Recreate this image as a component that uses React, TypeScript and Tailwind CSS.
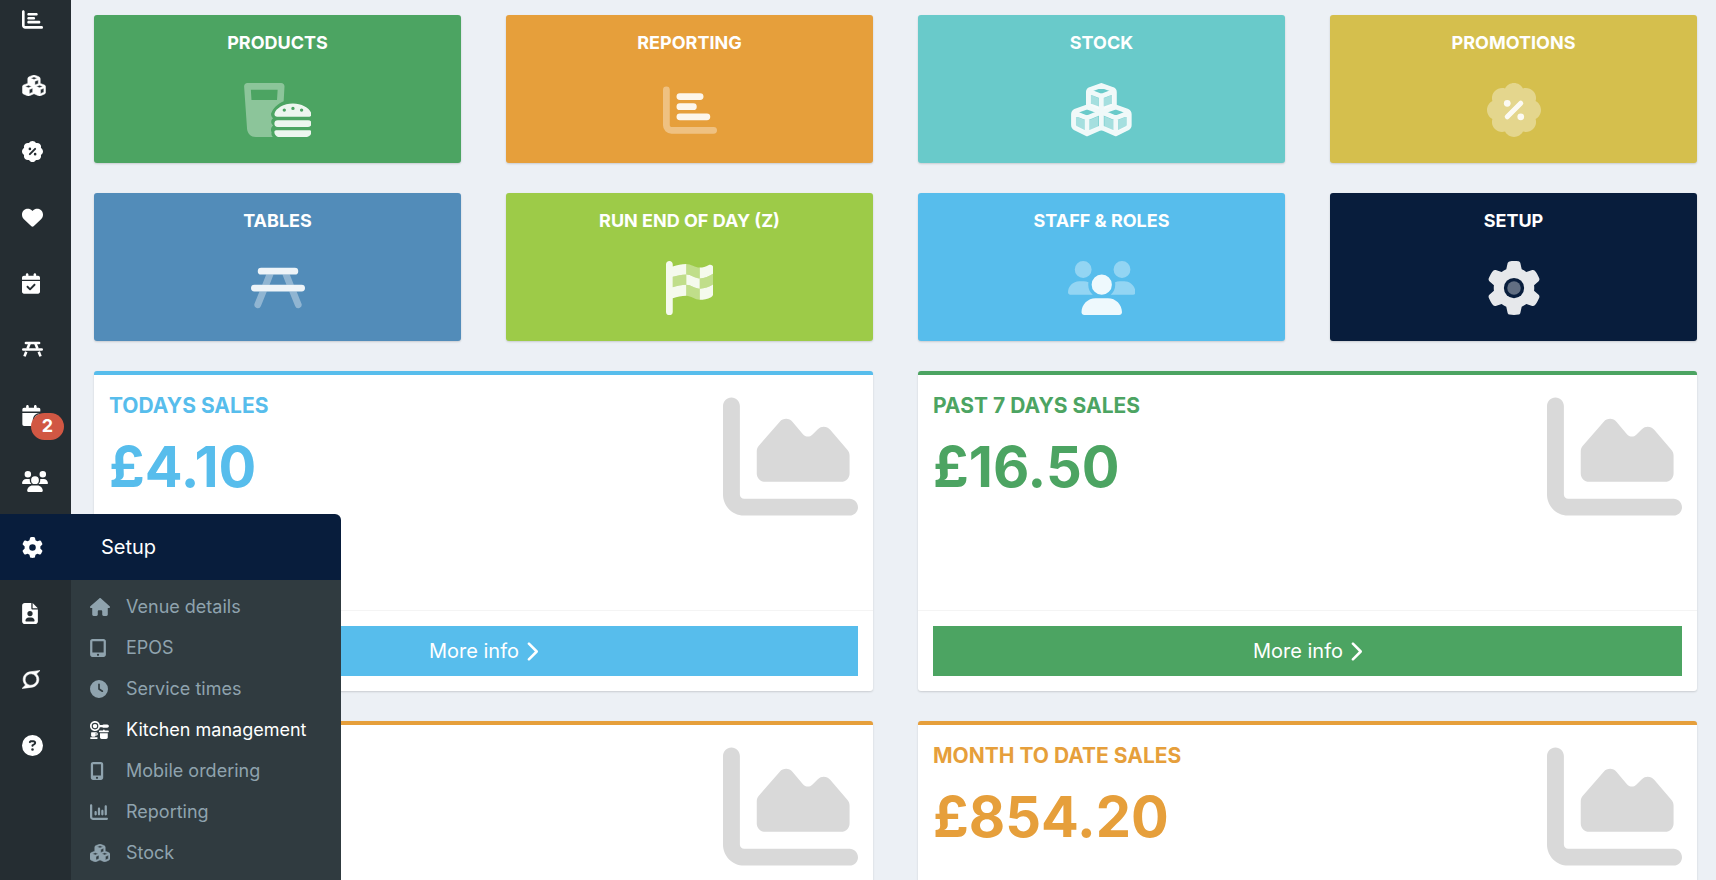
import type { ReactNode } from "react";
import {
  FaCalendar,
  FaCalendarCheck,
  FaChartArea,
  FaChartBar,
  FaChartColumn,
  FaChevronRight,
  FaCircleQuestion,
  FaClock,
  FaCubes,
  FaGear,
  FaHeart,
  FaHouse,
  FaKitchenSet,
  FaMobileScreenButton,
  FaSuperpowers,
  FaTabletScreenButton,
} from "react-icons/fa6";

type IconProps = { className?: string };

const BADGE_OUTLINE =
  "M256 0c36.8 0 68.8 20.7 84.9 51.1C373.8 41 411 49 437 75s34 63.3 23.9 96.1C491.3 187.2 512 219.2 512 256s-20.7 68.8-51.1 84.9C471 373.8 463 411 437 437s-63.3 34-96.1 23.9C324.8 491.3 292.8 512 256 512s-68.8-20.7-84.9-51.1C138.2 471 101 463 75 437s-34-63.3-23.9-96.1C20.7 324.8 0 292.8 0 256s20.7-68.8 51.1-84.9C41 138.2 49 101 75 75s63.3-34 96.1-23.9C187.2 20.7 219.2 0 256 0z";
const USERS_BACK =
  "M144 0a80 80 0 1 1 0 160A80 80 0 1 1 144 0zM512 0a80 80 0 1 1 0 160A80 80 0 1 1 512 0zM0 298.7C0 239.8 47.8 192 106.7 192h42.7c15.9 0 31 3.5 44.6 9.7c-1.3 7.2-1.9 14.7-1.9 22.3c0 38.2 16.8 72.5 43.3 96H21.3C9.6 320 0 310.4 0 298.7zM404.6 320c26.6-23.5 43.3-57.8 43.3-96c0-7.6-.7-15-1.9-22.3c13.6-6.3 28.7-9.7 44.6-9.7h42.7C592.2 192 640 239.8 640 298.7c0 11.8-9.6 21.3-21.3 21.3H404.6z";
const USERS_FRONT =
  "M224 224a96 96 0 1 1 192 0 96 96 0 1 1-192 0zM128 485.3C128 411.7 187.7 352 261.3 352H378.7C452.3 352 512 411.7 512 485.3c0 14.7-11.9 26.7-26.7 26.7H154.7c-14.7 0-26.7-11.9-26.7-26.7z";

/* Sidebar glyphs */

function SolidCubes({ className }: IconProps) {
  return (
    <svg viewBox="0 0 576 512" fill="currentColor" className={className} aria-hidden="true">
      <FaCubes className="h-[512px] w-[576px]" stroke="currentColor" strokeWidth="12" />
      <path d="M165 105L285 145V260L165 225zM34 310L150 350V470L34 430zM306 310L422 350V470L306 430z" />
    </svg>
  );
}

function PercentBadge({ className }: IconProps) {
  return (
    <svg viewBox="0 0 512 512" fill="currentColor" className={className} aria-hidden="true">
      <path
        fillRule="evenodd"
        d={`${BADGE_OUTLINE}M192 160a32 32 0 1 0 0 64 32 32 0 1 0 0-64zM320 288a32 32 0 1 0 0 64 32 32 0 1 0 0-64zM303 175L175 303a24 24 0 0 0 34 34L337 209a24 24 0 0 0-34-34z`}
      />
    </svg>
  );
}

function SolidPicnicTable({ className }: IconProps) {
  return (
    <svg viewBox="0 0 512 512" fill="none" stroke="currentColor" strokeWidth="64" strokeLinecap="round" className={className} aria-hidden="true">
      <path d="M96 96H416M32 256H480" />
      <path strokeLinecap="butt" d="M184 110L134 240M328 110L378 240M104 310L60 424M408 310L452 424" />
    </svg>
  );
}

function CalendarClock({ className }: IconProps) {
  return (
    <svg viewBox="0 0 576 512" fill="currentColor" className={className} aria-hidden="true">
      <FaCalendar className="h-[512px] w-[448px]" />
      <circle cx="432" cy="368" r="176" className="fill-[#252d32]" />
      <circle cx="432" cy="368" r="144" />
    </svg>
  );
}

function SolidUsers({ className }: IconProps) {
  return (
    <svg viewBox="0 0 640 512" fill="currentColor" className={className} aria-hidden="true">
      <path d={USERS_BACK + USERS_FRONT} />
    </svg>
  );
}

function FileUser({ className }: IconProps) {
  return (
    <svg viewBox="0 0 384 512" fill="currentColor" className={className} aria-hidden="true">
      <path
        fillRule="evenodd"
        d="M0 64C0 28.7 28.7 0 64 0H224V128c0 17.7 14.3 32 32 32H384V448c0 35.3-28.7 64-64 64H64c-35.3 0-64-28.7-64-64V64zM384 128H256V0L384 128zM192 192a64 64 0 1 0 0 128 64 64 0 1 0 0-128zM80 432c0 8.800 7.200 16 16 16H288c8.800 0 16-7.200 16-16c0-44.200-35.800-80-80-80H160c-44.200 0-80 35.800-80 80z"
      />
    </svg>
  );
}

/* Two-tone tile glyphs */

function BurgerGlass() {
  return (
    <svg viewBox="0 0 640 512" fill="currentColor" className="h-[54px]" aria-hidden="true">
      <path
        fillRule="evenodd"
        opacity="0.36"
        d="M32 0H352C371 0 385 15 384 34L376 172C320 194 270 246 257 290C254 306 262 324 276 334C252 350 252 386 276 402C252 420 252 452 262 468C258 484 260 500 274 512H110C66 512 32 478 29 436L1 34C0 15 14 0 32 0zM65 64L71 162H313L319 64z"
      />
      <path
        fillRule="evenodd"
        opacity="0.9"
        d="M314 320C298 320 286 307 289 291C299 240 378 194 464 194S629 240 639 291C642 307 630 320 614 320zM382 241a16 16 0 1 0 0 32 16 16 0 1 0 0-32zM464 225a16 16 0 1 0 0 32 16 16 0 1 0 0-32zM546 241a16 16 0 1 0 0 32 16 16 0 1 0 0-32zM320 352H608a32 32 0 0 1 0 64H320a32 32 0 0 1 0-64zM304 448H624C633 448 640 455 640 464C640 490 618 512 592 512H336C310 512 288 490 288 464C288 455 295 448 304 448z"
      />
    </svg>
  );
}

function BarChart() {
  return (
    <svg viewBox="0 0 512 512" fill="none" stroke="currentColor" strokeWidth="64" strokeLinecap="round" className="h-[54px]" aria-hidden="true">
      <path opacity="0.36" d="M32 64V400C32 426.500 53.500 448 80 448H480" />
      <path opacity="0.9" d="M160 128H352M160 224H288M160 320H416" />
    </svg>
  );
}

/* The two tinted side faces of one cube, centred on its vertical edge. */
function CubeFaces({ x, y }: { x: number; y: number }) {
  return (
    <path
      transform={`translate(${x} ${y})`}
      opacity="0.4"
      d="M-108 102L-24 136V240L-108 204zM108 102L24 136V240L108 204z"
    />
  );
}

function DuoCubes() {
  return (
    <svg viewBox="0 0 576 512" fill="currentColor" className="h-[54px]" aria-hidden="true">
      <CubeFaces x={288} y={8} />
      <CubeFaces x={152} y={214} />
      <CubeFaces x={424} y={214} />
      <g opacity="0.9" fill="none" stroke="currentColor" strokeWidth="46" strokeLinejoin="round">
        <path d="M288 24L394 62Q411 70 411 88V210L288 256L165 210V88Q165 70 182 62zM165 78L288 126L411 78M288 126V250" />
        <path d="M152 228L258 266L288 282L258 266L152 228L46 266Q24 276 24 296V398Q24 418 42 428L152 482L270 430L288 424V282M30 284L152 332L288 276M152 332V482" />
        <path d="M424 228L318 266L288 282L318 266L424 228L530 266Q552 276 552 296V398Q552 418 534 428L424 482L306 430L288 424M546 284L424 332L288 276M424 332V482" />
      </g>
    </svg>
  );
}

function DuoPercentBadge() {
  return (
    <svg viewBox="0 0 512 512" fill="currentColor" className="h-[54px]" aria-hidden="true">
      <path opacity="0.36" d={BADGE_OUTLINE} />
      <g opacity="0.9">
        <circle cx="192" cy="192" r="32" />
        <circle cx="320" cy="320" r="32" />
        <path d="M320 192L192 320" stroke="currentColor" strokeWidth="48" strokeLinecap="round" />
      </g>
    </svg>
  );
}

function DuoPicnicTable() {
  return (
    <svg viewBox="0 0 512 512" fill="none" stroke="currentColor" strokeWidth="64" className="h-[54px]" aria-hidden="true">
      <path
        fill="currentColor"
        stroke="none"
        opacity="0.36"
        d="M144 128H214L176 224H106zM368 128H298L336 224H406zM80 288H150L94 426A32 32 0 0 1 34 403zM432 288H362L418 426A32 32 0 0 0 478 403z"
      />
      <path opacity="0.9" strokeLinecap="round" d="M96 96H416M32 256H480" />
    </svg>
  );
}

function DuoFlag() {
  return (
    <svg viewBox="0 0 448 512" fill="currentColor" className="h-[54px]" aria-hidden="true">
      <path
        opacity="0.36"
        d="M64 150C106 138 148 128 192 128V226C148 226 106 238 64 250zM192 28C236 28 276 62 320 62V165C276 165 236 128 192 128zM192 226C236 226 276 263 320 263V368C276 368 236 330 192 330zM320 165C366 165 410 145 448 120V222C410 247 366 263 320 263z"
      />
      <path
        opacity="0.9"
        d="M32 0C50 0 64 14 64 32V52C106 38 148 28 192 28V128C148 128 106 138 64 150V250C106 238 148 226 192 226V330C148 330 106 340 64 352V480A32 32 0 0 1 0 480V32C0 14 14 0 32 0zM192 128C236 128 276 165 320 165V263C276 263 236 226 192 226zM320 62C350 62 376 52 402 40C428 28 448 42 448 66V120C410 145 366 165 320 165zM320 263C366 263 410 247 448 222V310C448 324 440 336 427 343C392 360 356 368 320 368z"
      />
    </svg>
  );
}

function DuoUsers() {
  return (
    <svg viewBox="0 0 640 512" fill="currentColor" className="h-[54px]" aria-hidden="true">
      <path opacity="0.36" d={USERS_BACK} />
      <path opacity="0.9" d={USERS_FRONT} />
    </svg>
  );
}

function DuoGear() {
  return (
    <svg viewBox="0 0 512 512" fill="currentColor" className="h-[54px]" aria-hidden="true">
      <g opacity="0.9">
        <FaGear size={512} />
      </g>
      <circle cx="256" cy="256" r="96" className="fill-[#081d3c]" />
      <circle cx="256" cy="256" r="64" opacity="0.36" />
    </svg>
  );
}

const tiles: { label: string; color: string; icon: ReactNode }[] = [
  { label: "PRODUCTS", color: "bg-[#4ca462]", icon: <BurgerGlass /> },
  { label: "REPORTING", color: "bg-[#e69f3b]", icon: <BarChart /> },
  { label: "STOCK", color: "bg-[#69caca]", icon: <DuoCubes /> },
  { label: "PROMOTIONS", color: "bg-[#d5bf4d]", icon: <DuoPercentBadge /> },
  { label: "TABLES", color: "bg-[#528cb9]", icon: <DuoPicnicTable /> },
  { label: "RUN END OF DAY (Z)", color: "bg-[#9dcb48]", icon: <DuoFlag /> },
  { label: "STAFF & ROLES", color: "bg-[#57bdec]", icon: <DuoUsers /> },
  { label: "SETUP", color: "bg-[#081d3c]", icon: <DuoGear /> },
];

const panels = [
  { title: "TODAYS SALES", value: "£4.10", border: "border-[#57bdec]", text: "text-[#57bdec]", button: "bg-[#57bdec]" },
  { title: "PAST 7 DAYS SALES", value: "£16.50", border: "border-[#4ca462]", text: "text-[#4ca462]", button: "bg-[#4ca462]" },
  { title: "", value: "", border: "border-[#e69f3b]", text: "text-[#e69f3b]", button: "bg-[#e69f3b]" },
  { title: "MONTH TO DATE SALES", value: "£854.20", border: "border-[#e69f3b]", text: "text-[#e69f3b]", button: "bg-[#e69f3b]" },
];

const setupMenu = [
  { label: "Venue details", Icon: FaHouse, width: "w-5" },
  { label: "EPOS", Icon: FaTabletScreenButton, width: "w-4" },
  { label: "Service times", Icon: FaClock, width: "w-[18px]" },
  { label: "Kitchen management", Icon: FaKitchenSet, width: "w-5", active: true },
  { label: "Mobile ordering", Icon: FaMobileScreenButton, width: "w-3.5" },
  { label: "Reporting", Icon: FaChartColumn, width: "w-[18px]" },
  { label: "Stock", Icon: SolidCubes, width: "w-5" },
];

function NavItem({ label, children }: { label: string; children: ReactNode }) {
  return (
    <li>
      <a href="#" aria-label={label} className="flex h-[66px] items-center pl-[22px]">
        <span className="relative">{children}</span>
      </a>
    </li>
  );
}

function Sidebar() {
  return (
    <nav className="relative z-10 -mt-3.5 w-[71px] shrink-0 bg-[#252d32] text-white">
      <ul>
        <NavItem label="Reporting"><FaChartBar className="size-[21px]" /></NavItem>
        <NavItem label="Stock"><SolidCubes className="h-[21px] w-6" /></NavItem>
        <NavItem label="Promotions"><PercentBadge className="size-[21px]" /></NavItem>
        <NavItem label="Loyalty"><FaHeart className="size-[21px]" /></NavItem>
        <NavItem label="Bookings"><FaCalendarCheck className="h-[21px] w-[18px]" /></NavItem>
        <NavItem label="Tables"><SolidPicnicTable className="size-[21px]" /></NavItem>
        <NavItem label="Pending bookings">
          <CalendarClock className="h-[21px] w-6" />
          <span className="absolute top-2 left-[9px] flex h-[27px] w-[33px] items-center justify-center rounded-full bg-[#d15743] text-lg leading-none font-bold">
            2
          </span>
        </NavItem>
        <NavItem label="Staff"><SolidUsers className="h-[21px] w-[26px]" /></NavItem>
        <li className="relative">
          <a href="#" aria-label="Setup" className="flex h-[66px] items-center bg-[#081d3c] pl-[22px]">
            <FaGear className="size-[21px]" />
          </a>
          <div className="absolute top-0 left-full w-[270px]">
            <h2 className="flex h-[66px] items-center rounded-tr-md bg-[#081d3c] pl-[30px] text-[20px]">Setup</h2>
            <ul className="bg-[#303b40] pt-1.5 pb-3">
              {setupMenu.map(({ label, Icon, width, active }) => (
                <li key={label}>
                  <a
                    href="#"
                    className={`flex h-[41px] items-center pl-[19px] text-lg ${active ? "text-white" : "text-[#8fa3ae]"}`}
                  >
                    <span className="w-9 shrink-0">
                      <Icon className={`h-[18px] ${width}`} />
                    </span>
                    {label}
                  </a>
                </li>
              ))}
            </ul>
          </div>
        </li>
        <NavItem label="Documents"><FileUser className="h-[21px] w-4" /></NavItem>
        <NavItem label="Integrations"><FaSuperpowers className="h-[21px] w-[18px]" stroke="currentColor" strokeWidth="14" /></NavItem>
        <NavItem label="Help"><FaCircleQuestion className="size-[21px]" /></NavItem>
      </ul>
    </nav>
  );
}

export default function App() {
  return (
    <div className="flex h-screen overflow-hidden bg-[#ecf0f5] font-[Inter,sans-serif]">
      <Sidebar />
      <main className="min-w-0 flex-1 overflow-y-auto pt-[15px] pr-[19px] pb-[30px] pl-[23px] [scrollbar-width:none]">
        <div className="grid grid-cols-4 gap-x-[45px] gap-y-[30px]">
          {tiles.map((t) => (
            <a key={t.label} href="#" className={`flex h-[148px] flex-col items-center rounded-[3px] pt-3.5 text-white shadow-[0_1px_2px_rgba(0,0,0,0.15)] ${t.color}`}>
              <span className="text-lg leading-7 font-bold">{t.label}</span>
              <span className="mt-[26px]">{t.icon}</span>
            </a>
          ))}
        </div>
        <div className="mt-[30px] grid grid-cols-2 gap-x-[45px] gap-y-[30px]">
          {panels.map((p, i) => (
            <section key={i} className={`rounded-[3px] border-t-4 bg-white shadow-[0_1px_2px_rgba(0,0,0,0.15)] ${p.border}`}>
              <div className="flex h-[235px] items-start justify-between px-[15px] pt-3.5">
                <div className={p.text}>
                  <h3 className="text-[21px] leading-[34px] font-bold">{p.title}</h3>
                  <p className="mt-3.5 text-[56px] leading-[60px] font-bold">{p.value}</p>
                </div>
                <FaChartArea className="size-[135px] text-[#d9d9d9]" />
              </div>
              <div className="border-t border-[#f4f4f4] p-[15px]">
                <button type="button" className={`flex h-[50px] w-full items-center justify-center gap-1.5 text-[20px] text-white ${p.button}`}>
                  More info
                  <FaChevronRight className="h-[21px] w-[13px]" />
                </button>
              </div>
            </section>
          ))}
        </div>
      </main>
    </div>
  );
}
